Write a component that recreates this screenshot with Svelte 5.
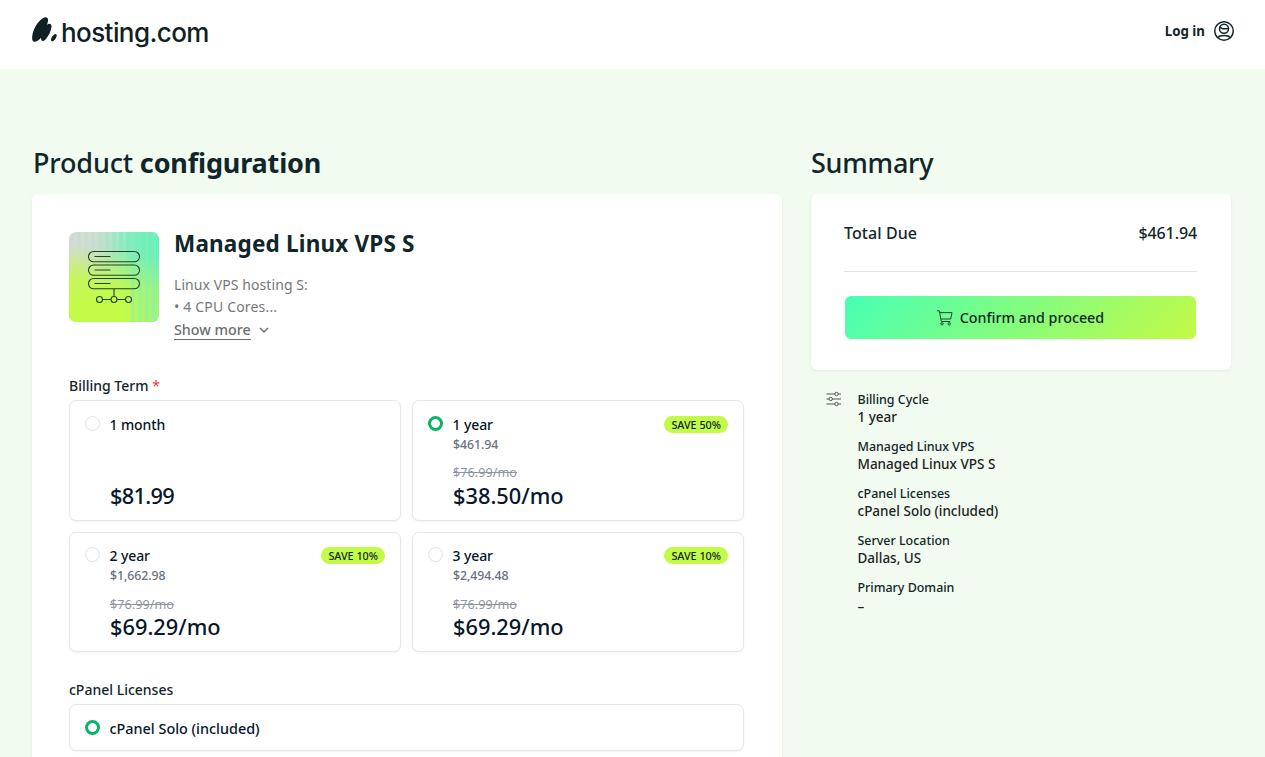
<script>
  const terms = [
    { label: '1 month', price: '$81.99' },
    { label: '1 year', total: '$461.94', was: '$76.99/mo', price: '$38.50/mo', save: 'SAVE 50%', selected: true },
    { label: '2 year', total: '$1,662.98', was: '$76.99/mo', price: '$69.29/mo', save: 'SAVE 10%' },
    { label: '3 year', total: '$2,494.48', was: '$76.99/mo', price: '$69.29/mo', save: 'SAVE 10%' }
  ];
  const details = [
    ['Billing Cycle', '1 year'],
    ['Managed Linux VPS', 'Managed Linux VPS S'],
    ['cPanel Licenses', 'cPanel Solo (included)'],
    ['Server Location', 'Dallas, US'],
    ['Primary Domain', '–']
  ];
</script>

<div class="page">
  <header>
    <div class="logo">
      <svg width="27" height="28" viewBox="0 0 27 28" fill="#0f2124">
        <path d="M1.200 20.500C1.800 14 6 6 11.500 2.400C14.500.3 17.600 1 17 5C16.900 6.200 16.500 7.500 16 8.700C18.300 6.600 20.800 7.800 20.500 10.800C20 15.300 17.200 20.900 14 24C12 25.900 9.700 25.300 10.100 21.800C8 23.900 5 26.400 2.900 25.700C1.100 25.100 1 22.600 1.200 20.500Z" />
        <path d="M20 23.600C20.300 20.900 22.700 18.300 24.500 18C26.400 18.100 25.800 20.800 24.300 23C22.500 25.500 19.900 26.400 20 23.600Z" />
      </svg>
      <span>hosting.com</span>
    </div>
    <div class="login">
      <span>Log in</span>
      <svg width="22" height="22" viewBox="0 0 22 22" fill="none" stroke="#10262a" stroke-width="1.500">
        <circle cx="11" cy="11" r="9.300" />
        <circle cx="11" cy="8.700" r="4.500" />
        <path d="M7 6.800C8.500 9.800 12.500 8.500 15.300 8.500M4.600 17.500C7 14.800 15 14.800 17.400 17.500" />
      </svg>
    </div>
  </header>

  <div class="content">
    <main>
      <h1>Product <b>configuration</b></h1>
      <section class="card config">
        <div class="product">
          <svg class="thumb" width="90" height="90" viewBox="0 0 90 90" fill="none">
            <defs>
              <linearGradient id="top" x1="0" y1="0" x2="1" y2="0">
                <stop offset="0" stop-color="#d5d8d5" /><stop offset=".3" stop-color="#c8dcd0" />
                <stop offset=".65" stop-color="#82edbd" /><stop offset="1" stop-color="#5df5b5" />
              </linearGradient>
              <linearGradient id="low" x1=".4" y1="0" x2=".25" y2="1">
                <stop offset=".18" stop-color="#c3fb48" stop-opacity="0" />
                <stop offset=".55" stop-color="#c3fb48" stop-opacity=".85" />
                <stop offset=".8" stop-color="#c3fb48" />
              </linearGradient>
              <linearGradient id="side" x1="0" y1="0" x2="1" y2="0">
                <stop offset=".6" stop-color="#62f1b7" stop-opacity="0" />
                <stop offset="1" stop-color="#72eebc" stop-opacity=".45" />
              </linearGradient>
              <linearGradient id="stripe" x1="0" y1="0" x2="1" y2="0">
                <stop offset="0" stop-color="#8ee9bd" stop-opacity="0" />
                <stop offset=".7" stop-color="#8ee9bd" stop-opacity=".6" />
                <stop offset="1" stop-color="#8ee9bd" stop-opacity="0" />
              </linearGradient>
              <linearGradient id="fade" x1="0" y1="0" x2="0" y2="1">
                <stop offset="0" stop-color="#d3f2d0" stop-opacity=".25" />
                <stop offset="1" stop-color="#b9f590" stop-opacity="0" />
              </linearGradient>
            </defs>
            <rect width="90" height="90" fill="url(#top)" />
            <rect width="90" height="90" fill="url(#low)" />
            <rect width="90" height="90" fill="url(#side)" />
            {#each [5, 12, 19, 26, 33, 40, 47, 54] as x}
              <rect {x} y="0" width="3" height="48" fill="url(#fade)" />
            {/each}
            {#each [61, 68, 75, 82] as x}
              <rect {x} y="0" width="5" height="90" fill="url(#stripe)" />
            {/each}
            <g stroke="#25431f" stroke-width="1.100">
              <rect x="19.500" y="19.500" width="51" height="10.300" rx="5.150" />
              <rect x="19.500" y="33" width="51" height="10.300" rx="5.150" />
              <rect x="19.500" y="46.500" width="51" height="10.300" rx="5.150" />
              <path d="M25.500 24.500H41.500M25.500 38H41.500M25.500 51.500H41.500M45 57V64.500M33.500 67.500H42M48 67.500H56.500" />
              <circle cx="30.500" cy="67.500" r="3" /><circle cx="45" cy="67.500" r="3" /><circle cx="59.500" cy="67.500" r="3" />
            </g>
          </svg>
          <div class="about">
            <h2>Managed Linux VPS S</h2>
            <p>Linux VPS hosting S:</p>
            <p class="cores">• 4 CPU Cores...</p>
            <div class="more">
              <span>Show more</span>
              <svg width="10" height="7" viewBox="0 0 10 7" fill="none" stroke="#6b6f70" stroke-width="1.400"><path d="M1 1L5 5L9 1" /></svg>
            </div>
          </div>
        </div>

        <div class="label">Billing Term <i>*</i></div>
        <div class="terms">
          {#each terms as t}
            <div class="option term">
              <span class="radio" class:on={t.selected}></span>
              <div class="info">
                <div class="name">{t.label}</div>
                <div class="total">{t.total ?? ''}</div>
                <div class="was"><s>{t.was ?? ''}</s></div>
                <div class="price" class:tight={!t.was}>{t.price}</div>
              </div>
              {#if t.save}<span class="save">{t.save}</span>{/if}
            </div>
          {/each}
        </div>

        <div class="label second">cPanel Licenses</div>
        <div class="option license">
          <span class="radio on"></span>
          <div class="name wide">cPanel Solo (included)</div>
        </div>
      </section>
    </main>

    <aside>
      <h1>Summary</h1>
      <section class="card totals">
        <div class="due"><span>Total Due</span><span class="amount">$461.94</span></div>
        <button>
          <svg width="16" height="16" viewBox="0 0 16 16" fill="none" stroke="#1d4a35" stroke-width="1">
            <path d="M0 .8H2.300L4.300 11.500H13.300M2.700 2.600H15L13.700 9H3.900" />
            <circle cx="5" cy="13.800" r="1.200" /><circle cx="12.200" cy="13.800" r="1.200" />
          </svg>
          <span>Confirm and proceed</span>
        </button>
      </section>
      <div class="details">
        <svg width="16" height="16" viewBox="0 0 16 16" fill="none" stroke="#4c5653" stroke-width="1">
          <path d="M.5 3H8.800M12.200 3H15M.5 8H3M6.400 8H15M.5 13H8.800M12.200 13H15" />
          <circle cx="10.500" cy="3" r="1.700" /><circle cx="4.700" cy="8" r="1.700" /><circle cx="10.500" cy="13" r="1.700" />
        </svg>
        <dl>
          {#each details as [k, v]}
            <div><dt>{k}</dt><dd>{v}</dd></div>
          {/each}
        </dl>
      </div>
    </aside>
  </div>
</div>

<style>
  :global(body) { margin: 0; }
  .page { height: 757px; overflow: hidden; background: #f1fbf0; font-family: "Noto Sans", "Open Sans", sans-serif; color: #10262a; }
  .page * { box-sizing: border-box; white-space: nowrap; }
  header { height: 69px; background: #fff; display: flex; justify-content: space-between; padding: 16px 30px 0 31px; }
  .logo { display: flex; gap: 3px; }
  .logo span { font: 500 26px/34px Inter, sans-serif; letter-spacing: -.58px; color: #0f2124; }
  .login { display: flex; gap: 8px; height: 30px; align-items: center; font-size: 13.300px; font-weight: 700; }
  .content { display: flex; gap: 29px; padding: 74px 34px 0 32px; }
  main { width: 750px; }
  aside { width: 420px; }
  h1 { margin: 0 0 11px 1px; font-size: 27px; line-height: 40px; font-weight: 500; letter-spacing: -.16px; }
  aside h1 { margin-left: 0; letter-spacing: -.25px; }
  .card { background: #fff; border-radius: 6px; box-shadow: 0 1px 3px rgba(20, 60, 40, .08); }
  .config { height: 620px; padding: 38px 38px 0 37px; }
  .product { display: flex; gap: 15px; height: 140px; }
  .thumb { border-radius: 7px; flex: none; }
  h2 { margin: 0 0 18px; font-size: 22.500px; line-height: 24px; font-weight: 700; letter-spacing: .18px; }
  p { margin: 0; font-size: 14px; line-height: 22px; color: #74787a; letter-spacing: .08px; }
  .cores { letter-spacing: .18px; }
  .more { display: flex; align-items: center; gap: 8px; font-size: 14.300px; font-weight: 500; line-height: 19px; color: #6b6f70; margin-top: 2px; }
  .more span { border-bottom: 1px solid #6b6f70; }
  .label { font-size: 14px; font-weight: 500; line-height: 20px; padding-top: 4px; margin-bottom: 4px; height: 24px; }
  .label i { color: #e83a3a; font-style: normal; font-weight: 400; }
  .terms { display: grid; grid-template-columns: 1fr 1fr; gap: 11px; }
  .option { display: flex; border: 1px solid #e5e7e8; border-radius: 7px; background: #fff; box-shadow: 0 1px 2px rgba(0, 0, 0, .05); padding: 0 15px; color: #06162c; }
  .term { height: 120.500px; padding-top: 14px; }
  .radio { flex: none; width: 15px; height: 15px; border: 1px solid #dfe1e3; border-radius: 50%; margin: 1px 10px 0 0; }
  .term:nth-child(n + 3) { padding-top: 13px; }
  .on { border: 0; background: radial-gradient(circle, #fff 4.100px, #07b566 4.700px); }
  .name { font-size: 14px; font-weight: 500; line-height: 19px; margin-left: -.5px; }
  .term .name { letter-spacing: -.1px; }
  .name.wide { font-size: 14.400px; }
  .info { flex: 1; }
  .total { height: 18px; margin-top: 2px; font-size: 12.300px; font-weight: 500; line-height: 18px; color: #667080; letter-spacing: -.05px; }
  .was { height: 18px; margin-top: 9px; margin-bottom: 1px; font-size: 12.700px; line-height: 18px; color: #8e95a1; }
  .term:nth-child(n + 3) .was { margin-top: 10px; margin-bottom: 0; }
  .price { font-size: 21.800px; font-weight: 500; line-height: 28px; }
  .tight { letter-spacing: -.7px; }
  .save { height: 17px; margin-top: 1px; border-radius: 9px; padding: 0 7px; background: #c1fb47; font-size: 10.800px; font-weight: 500; line-height: 17px; color: #10262a; }
  .second { margin-top: 24px; }
  .license { height: 47px; padding-top: 14px; }
  .totals { height: 176px; padding: 28px 34px 0 33px; }
  .due { height: 50px; display: flex; justify-content: space-between; border-bottom: 1px solid #e3e6e6; font-size: 16px; font-weight: 500; line-height: 22px; }
  .due span:first-child { letter-spacing: .08px; }
  .amount { letter-spacing: -.1px; }
  button { width: 351px; height: 43px; margin: 24px 0 0 1px; border: 0; border-radius: 6px; background: linear-gradient(135deg, #46ffb5, #c4fa45); display: flex; align-items: center; justify-content: center; gap: 7px; padding: 1px 6px 0; font: 500 14.300px/22px "Noto Sans", sans-serif; color: #10262a; }
  .details { display: flex; gap: 16px; padding: 21px 0 0 15px; }
  dl { margin: 0 0 0 -.5px; font-weight: 500; line-height: 18px; }
  dl div { margin-bottom: 11px; }
  dt { font-size: 12.450px; }
  dd { margin: 0; font-size: 13.500px; color: #222; position: relative; top: -1px; }
  dl div:last-child dd { top: 1px; }
</style>
